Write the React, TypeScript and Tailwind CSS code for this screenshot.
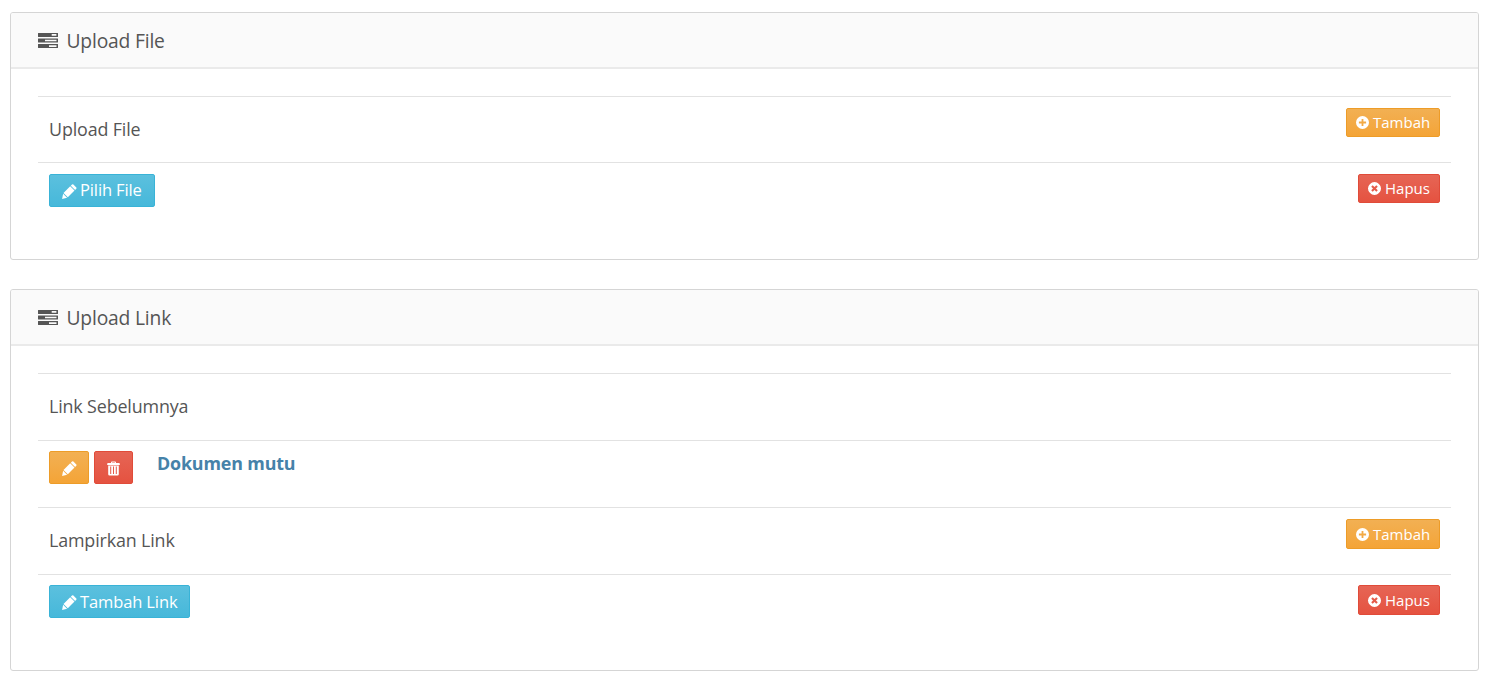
import type { ReactNode } from "react";

function TasksIcon() {
  return (
    <svg className="h-[15px] w-5 shrink-0" viewBox="0 0 20 15" fill="#555555" fillRule="evenodd">
      <path d="M.3 0h19.400l.3.3v3.400l-.3.3H.3L0 3.700V.3zM13.700 1.100v1.700h4.700V1.100z" />
      <path d="M.3 5.500h19.400l.3.3v3.400l-.3.3H.3L0 9.200V5.800zM7 6.700v1.500h11.500V6.700z" />
      <path d="M.3 11h19.400l.3.3v3.400l-.3.3H.3l-.3-.3v-3.400zM11 12.200v1.700h7.500v-1.700z" />
    </svg>
  );
}

function PencilIcon() {
  return (
    <svg className="mt-px size-[15px] shrink-0" viewBox="0 0 15 15" fill="#ffffff">
      <path d="M10 .5q.7-.6 1.400 0l2.900 2.900q.6.7 0 1.400l-1.200 1.200L8.800 1.700zM8.200 2.300l4.300 4.300-6.700 6.700L1.500 9zM1.100 9.700l4 4L.1 14.900z" />
    </svg>
  );
}

function TrashIcon() {
  return (
    <svg className="mt-px h-[15px] w-[13px] shrink-0" viewBox="0 0 13 15" fill="#ffffff" fillRule="evenodd">
      <path d="M4 1.500Q4 .4 5 .4h3q1 0 1 1.100v.6h3q.8 0 .8.800V4H.2V2.900q0-.8.8-.8h3zM5.100 1.500v.6h2.800v-.6zM1.200 4.600h10.600v8.600q0 1.400-1.400 1.400H2.600q-1.400 0-1.400-1.400zM3.200 5.500v7.500h1V5.500zm2.800 0v7.500h1V5.500zm2.800 0v7.500h1V5.500z" />
    </svg>
  );
}

function PlusCircleIcon() {
  return (
    <svg className="size-[13px] shrink-0" viewBox="0 0 13 13" fill="#ffffff" fillRule="evenodd">
      <path d="M6.500 0a6.500 6.500 0 1 1 0 13a6.500 6.500 0 0 1 0-13zM5.600 2.900v2.700H2.900v1.800h2.700v2.700h1.800V7.400h2.700V5.600H7.400V2.900z" />
    </svg>
  );
}

function CrossCircleIcon() {
  return (
    <svg className="size-[13px] shrink-0 rotate-45" viewBox="0 0 13 13" fill="#ffffff" fillRule="evenodd">
      <path d="M6.500 0a6.500 6.500 0 1 1 0 13a6.500 6.500 0 0 1 0-13zM5.450 2.900v2.550H2.900v2.100h2.550v2.550h2.100V7.550h2.550v-2.100H7.550V2.900z" />
    </svg>
  );
}

const tones = {
  info: "border-[#39b3d7] bg-linear-to-b from-[#5bc0de] to-[#46b8da]",
  warning: "border-[#ed9c28] bg-linear-to-b from-[#f2b053] to-[#f4a436]",
  danger: "border-[#e04b39] bg-linear-to-b from-[#e66555] to-[#e55240]",
};

function Button({ tone, className, children }: { tone: keyof typeof tones; className: string; children?: ReactNode }) {
  return (
    <button type="button" className={`flex shrink-0 items-center rounded-[2px] border whitespace-nowrap text-white ${tones[tone]} ${className}`}>
      {children}
    </button>
  );
}

function Add({ className }: { className: string }) {
  return (
    <Button tone="warning" className={`w-[94px] gap-1 pl-[9px] text-[15px] ${className}`}>
      <PlusCircleIcon />
      <span>Tambah</span>
    </Button>
  );
}

function Remove({ className }: { className: string }) {
  return (
    <Button tone="danger" className={`w-[82px] gap-1 pl-[9px] text-[15px] ${className}`}>
      <CrossCircleIcon />
      <span>Hapus</span>
    </Button>
  );
}

function Row({ className, children }: { className: string; children: ReactNode }) {
  return <div className={`flex items-start border-t border-[#e2e2e2] px-[11px] ${className}`}>{children}</div>;
}

function Label({ children }: { children: ReactNode }) {
  return <div className="mt-5 mr-auto text-[17.875px] leading-[25px] tracking-[-0.14px]">{children}</div>;
}

function Panel({ title, className, children }: { title: string; className: string; children: ReactNode }) {
  return (
    <section className={`overflow-hidden rounded-[3px] border border-[#d5d5d5] bg-white ${className}`}>
      <header className="flex h-14 items-center gap-[8.500px] border-b-2 border-[#eaeaea] bg-[#fafafa] pl-[27px] text-[19.25px] tracking-[-0.18px]">
        <TasksIcon />
        <h2 className="pt-0.5">{title}</h2>
      </header>
      <div className="px-[27px] pt-[27px]">{children}</div>
    </section>
  );
}

export default function App() {
  return (
    <main className="flex h-[679px] w-[1488px] flex-col gap-[29px] bg-white pt-3 pr-[9px] pl-2.5 font-['Open_Sans',sans-serif] text-[#555555]">
      <Panel title="Upload File" className="h-[248px]">
        <Row className="h-[66px]">
          <Label>Upload File</Label>
          <Add className="mt-[11px] h-[29px]" />
        </Row>
        <Row className="h-[66px] justify-between">
          <Button tone="info" className="mt-[11px] h-[33px] w-[106px] gap-[3px] pl-3 text-[16.5px] tracking-[-0.12px]">
            <PencilIcon />
            <span>Pilih File</span>
          </Button>
          <Remove className="mt-[11px] h-[29px]" />
        </Row>
      </Panel>
      <Panel title="Upload Link" className="h-[382px]">
        <Row className="h-[67px]">
          <Label>Link Sebelumnya</Label>
        </Row>
        <Row className="h-[67px]">
          <Button tone="warning" className="mt-[10px] h-[33px] w-10 justify-center">
            <PencilIcon />
          </Button>
          <Button tone="danger" className="mt-[10px] ml-[5px] h-[33px] w-[39px] justify-center">
            <TrashIcon />
          </Button>
          <a href="#" className="mt-[10px] ml-6 text-[17.875px] leading-[25px] font-bold tracking-[-0.16px] text-[#4682a9]">
            Dokumen mutu
          </a>
        </Row>
        <Row className="h-[67px]">
          <Label>Lampirkan Link</Label>
          <Add className="mt-[11px] h-[30px]" />
        </Row>
        <Row className="h-[67px] justify-between">
          <Button tone="info" className="mt-[10px] h-[33px] w-[141px] gap-[3px] pl-3 text-[16.5px] tracking-[-0.12px]">
            <PencilIcon />
            <span className="pt-0.5">Tambah Link</span>
          </Button>
          <Remove className="mt-[10px] h-[30px]" />
        </Row>
      </Panel>
    </main>
  );
}
